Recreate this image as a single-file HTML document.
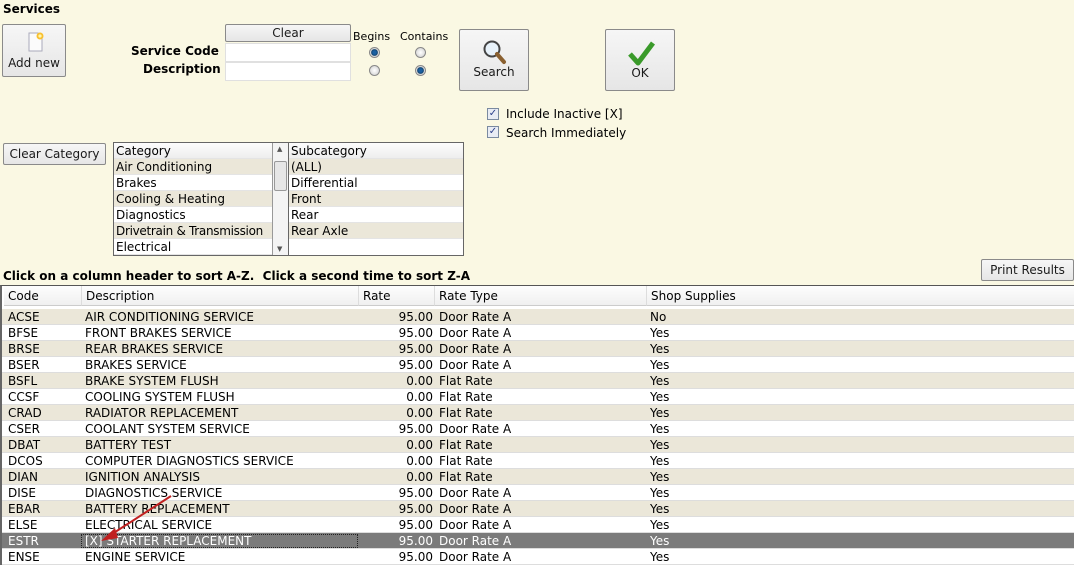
<!DOCTYPE html>
<html><head><meta charset="utf-8"><style>
*{box-sizing:border-box;margin:0;padding:0}
body{width:1074px;height:565px;overflow:hidden;background:#faf8e3;font-family:"DejaVu Sans","Liberation Sans",sans-serif;font-size:12px;color:#000;position:relative}
.a{position:absolute;white-space:nowrap}
.btn{position:absolute;background:linear-gradient(#f6f6f6,#e6e6e6);border:1px solid #8a8a8a;border-radius:2px;text-align:center;color:#1a1a1a}
.b{font-weight:bold;font-family:"DejaVu Sans",sans-serif}
.inp{position:absolute;background:#fff;border:1px solid #e0e0e0}
.radio{position:absolute;width:11px;height:11px;border-radius:50%;border:1px solid #888;background:radial-gradient(#fff,#ccc)}
.radio.on{background:radial-gradient(#1a5fa0 30%,#0b3d6a 45%,#ddd 60%)}
.chk{position:absolute;width:12px;height:12px;border:1px solid #7a8aa0;background:#e8ecf4;font-size:10px;line-height:10px;text-align:center;color:#2a3f8a}
.list{position:absolute;border:1px solid #666;background:#fff}
.lr{height:16px;line-height:16px;padding-left:2px;border-bottom:1px solid #e4e4e4}
.bg{background:#ebe7d9}
#grid{position:absolute;left:0;top:285px;width:1074px;height:280px;border-top:1px solid #555;border-left:2px solid #666;background:#fff}
.row{position:absolute;left:0;width:1072px;height:16px;line-height:16px;border-bottom:1px solid #ddd}
.row span{position:absolute}
.c1{left:6px}.c2{left:83px}.c3{left:345px;width:86px;text-align:right}.c4{left:437px}.c5{left:648px}
.hd{position:absolute;top:0;height:20px;line-height:20px;background:linear-gradient(#fdfdfd,#f0f0f0);border-right:1px solid #ddd;border-bottom:1px solid #ccc;padding-left:4px}
</style></head><body>
<div class="a b" style="left:3px;top:2px">Services</div>
<div class="btn" style="left:2px;top:24px;width:64px;height:53px">
<svg style="position:absolute;left:24px;top:6px" width="20" height="22"><path d="M2 2H11L15 6V20H2Z" fill="#fbfbfb" stroke="#aab"/><circle cx="13" cy="5" r="3.5" fill="#f8c030"/><circle cx="13" cy="5" r="1.6" fill="#fff6b0"/></svg>
<div style="position:absolute;left:0;right:0;top:31px">Add new</div></div>
<div class="btn" style="left:225px;top:24px;width:126px;height:18px;line-height:16px">Clear</div>
<div class="a b" style="left:131px;top:44px">Service Code</div>
<div class="a b" style="left:143px;top:62px">Description</div>
<div class="inp" style="left:225px;top:43px;width:126px;height:19px"></div>
<div class="inp" style="left:225px;top:62px;width:126px;height:19px"></div>
<div class="a" style="left:353px;top:30px;font-size:11px">Begins</div>
<div class="a" style="left:400px;top:30px;font-size:11px">Contains</div>
<div class="radio on" style="left:369px;top:47px"></div>
<div class="radio" style="left:415px;top:47px"></div>
<div class="radio" style="left:369px;top:65px"></div>
<div class="radio on" style="left:415px;top:65px"></div>
<div class="btn" style="left:459px;top:29px;width:70px;height:62px">
<svg style="position:absolute;left:21px;top:9px" width="28" height="28"><circle cx="11" cy="10" r="7.5" fill="#e8f2fa" stroke="#444" stroke-width="2"/><path d="M16 15L23 23" stroke="#8a6030" stroke-width="4" stroke-linecap="round"/></svg>
<div style="position:absolute;left:0;right:0;top:35px">Search</div></div>
<div class="btn" style="left:605px;top:29px;width:70px;height:62px">
<svg style="position:absolute;left:22px;top:10px" width="28" height="26"><path d="M2 14L10 23L25 3" fill="none" stroke="#3a9a2a" stroke-width="5" stroke-linejoin="round"/></svg>
<div style="position:absolute;left:0;right:0;top:36px">OK</div></div>
<div class="chk" style="left:487px;top:108px">✓</div><div class="a" style="left:506px;top:107px">Include Inactive [X]</div>
<div class="chk" style="left:487px;top:126px">✓</div><div class="a" style="left:506px;top:126px">Search Immediately</div>
<div class="btn" style="left:3px;top:143px;width:103px;height:22px;line-height:20px">Clear Category</div>
<div class="list" style="left:113px;top:142px;width:176px;height:114px">
<div class="lr" style="background:linear-gradient(#fdfdfd,#eee)">Category</div>
<div class="lr bg">Air Conditioning</div><div class="lr">Brakes</div><div class="lr bg">Cooling &amp; Heating</div><div class="lr">Diagnostics</div><div class="lr bg" style="letter-spacing:-0.3px">Drivetrain &amp; Transmission</div><div class="lr">Electrical</div>
<div style="position:absolute;right:0;top:0;width:16px;height:112px;background:#f4f4f4;border-left:1px solid #999"><div style="position:absolute;left:1px;top:18px;width:13px;height:30px;border:1px solid #999;border-radius:2px;background:#e6e6e6"></div><div style="position:absolute;top:2px;left:4px;font-size:7px;color:#555">▲</div><div style="position:absolute;bottom:2px;left:4px;font-size:7px;color:#555">▼</div></div>
</div>
<div class="list" style="left:288px;top:142px;width:176px;height:114px">
<div class="lr" style="background:linear-gradient(#fdfdfd,#eee)">Subcategory</div>
<div class="lr bg">(ALL)</div><div class="lr">Differential</div><div class="lr bg">Front</div><div class="lr">Rear</div><div class="lr bg">Rear Axle</div>
</div>
<div class="a b" style="left:3px;top:269px">Click on a column header to sort A-Z.&nbsp; Click a second time to sort Z-A</div>
<div class="btn" style="left:981px;top:259px;width:93px;height:22px;line-height:20px">Print Results</div>
<div id="grid">
<div class="hd" style="left:2px;width:78px">Code</div><div class="hd" style="left:80px;width:277px">Description</div><div class="hd" style="left:357px;width:76px">Rate</div><div class="hd" style="left:433px;width:212px">Rate Type</div><div class="hd" style="left:645px;width:429px">Shop Supplies</div>
<div class="row bg" style="top:23px"><span class="c1">ACSE</span><span class="c2">AIR CONDITIONING SERVICE</span><span class="c3">95.00</span><span class="c4">Door Rate A</span><span class="c5">No</span></div>
<div class="row" style="top:39px"><span class="c1">BFSE</span><span class="c2">FRONT BRAKES SERVICE</span><span class="c3">95.00</span><span class="c4">Door Rate A</span><span class="c5">Yes</span></div>
<div class="row bg" style="top:55px"><span class="c1">BRSE</span><span class="c2">REAR BRAKES SERVICE</span><span class="c3">95.00</span><span class="c4">Door Rate A</span><span class="c5">Yes</span></div>
<div class="row" style="top:71px"><span class="c1">BSER</span><span class="c2">BRAKES SERVICE</span><span class="c3">95.00</span><span class="c4">Door Rate A</span><span class="c5">Yes</span></div>
<div class="row bg" style="top:87px"><span class="c1">BSFL</span><span class="c2">BRAKE SYSTEM FLUSH</span><span class="c3">0.00</span><span class="c4">Flat Rate</span><span class="c5">Yes</span></div>
<div class="row" style="top:103px"><span class="c1">CCSF</span><span class="c2">COOLING SYSTEM FLUSH</span><span class="c3">0.00</span><span class="c4">Flat Rate</span><span class="c5">Yes</span></div>
<div class="row bg" style="top:119px"><span class="c1">CRAD</span><span class="c2">RADIATOR REPLACEMENT</span><span class="c3">0.00</span><span class="c4">Flat Rate</span><span class="c5">Yes</span></div>
<div class="row" style="top:135px"><span class="c1">CSER</span><span class="c2">COOLANT SYSTEM SERVICE</span><span class="c3">95.00</span><span class="c4">Door Rate A</span><span class="c5">Yes</span></div>
<div class="row bg" style="top:151px"><span class="c1">DBAT</span><span class="c2">BATTERY TEST</span><span class="c3">0.00</span><span class="c4">Flat Rate</span><span class="c5">Yes</span></div>
<div class="row" style="top:167px"><span class="c1">DCOS</span><span class="c2">COMPUTER DIAGNOSTICS SERVICE</span><span class="c3">0.00</span><span class="c4">Flat Rate</span><span class="c5">Yes</span></div>
<div class="row bg" style="top:183px"><span class="c1">DIAN</span><span class="c2">IGNITION ANALYSIS</span><span class="c3">0.00</span><span class="c4">Flat Rate</span><span class="c5">Yes</span></div>
<div class="row" style="top:199px"><span class="c1">DISE</span><span class="c2">DIAGNOSTICS SERVICE</span><span class="c3">95.00</span><span class="c4">Door Rate A</span><span class="c5">Yes</span></div>
<div class="row bg" style="top:215px"><span class="c1">EBAR</span><span class="c2">BATTERY REPLACEMENT</span><span class="c3">95.00</span><span class="c4">Door Rate A</span><span class="c5">Yes</span></div>
<div class="row" style="top:231px"><span class="c1">ELSE</span><span class="c2">ELECTRICAL SERVICE</span><span class="c3">95.00</span><span class="c4">Door Rate A</span><span class="c5">Yes</span></div>
<div class="row" style="top:247px;background:#7b7b7b;color:#fff"><span class="c1">ESTR</span><span style="left:79px;top:1px;width:277px;height:14px;border:1px dotted #222"></span><span class="c2">[X] STARTER REPLACEMENT</span><span class="c3">95.00</span><span class="c4">Door Rate A</span><span class="c5">Yes</span></div>
<div class="row" style="top:263px"><span class="c1">ENSE</span><span class="c2">ENGINE SERVICE</span><span class="c3">95.00</span><span class="c4">Door Rate A</span><span class="c5">Yes</span></div>
</div>
<svg class="a" style="left:95px;top:494px" width="80" height="55"><path d="M76 2L14 42" stroke="#c02020" stroke-width="2"/><path d="M6 47L20 34L23 44Z" fill="#c02020"/></svg>
</body></html>
